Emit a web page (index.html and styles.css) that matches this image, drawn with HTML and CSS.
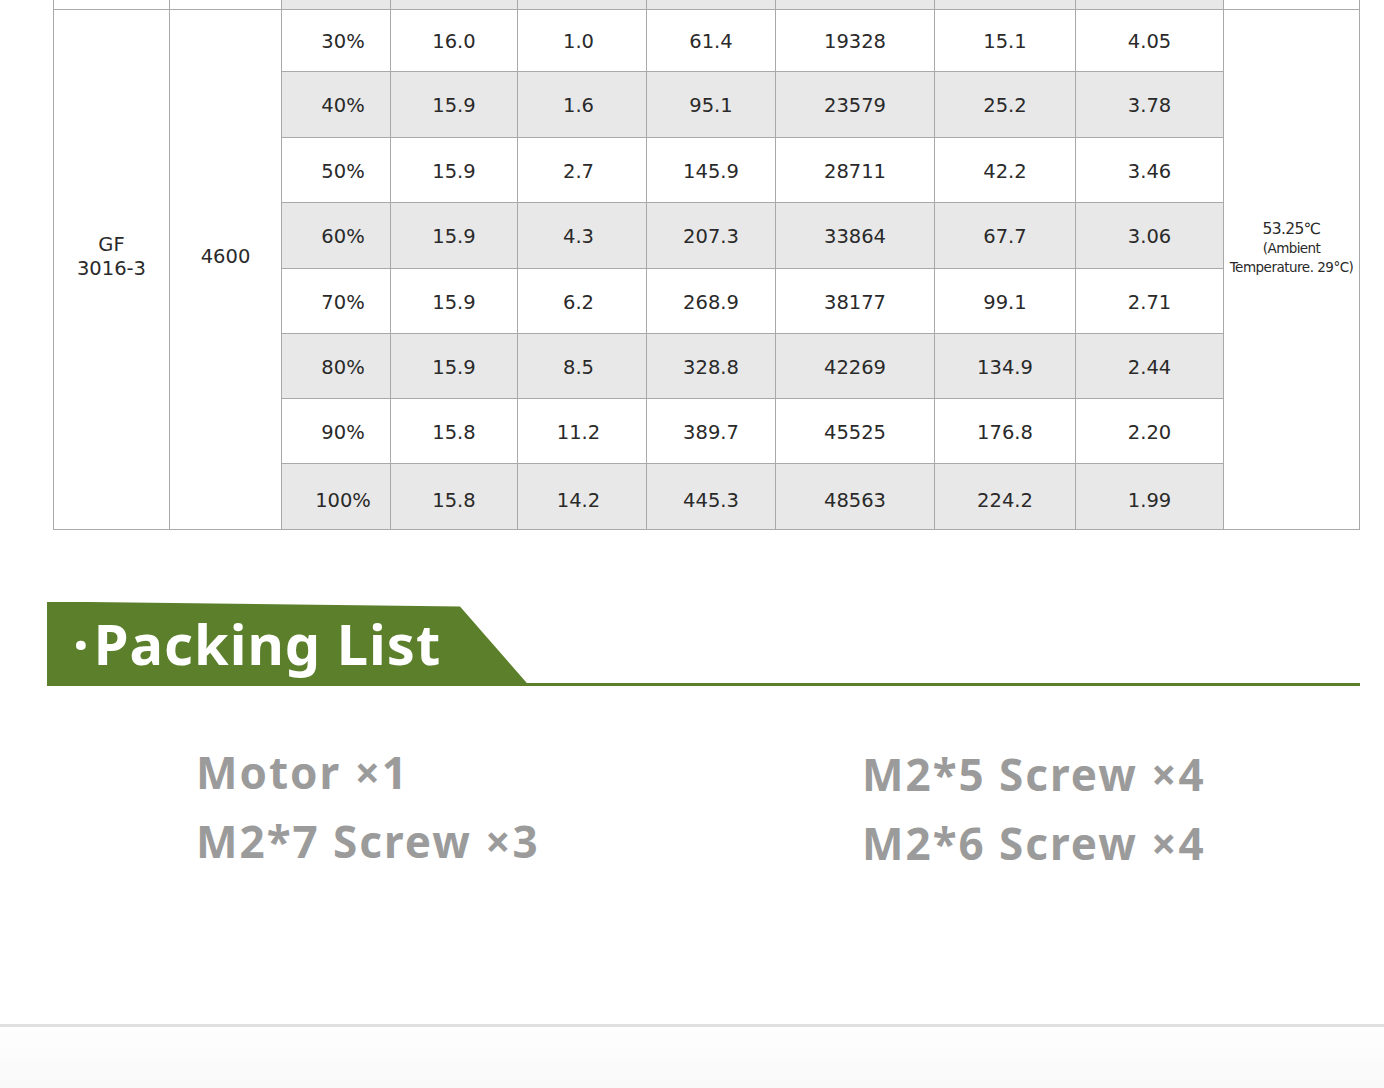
FILE: index.html
```html
<!DOCTYPE html>
<html lang="en">
<head>
<meta charset="utf-8">
<title>Packing List</title>
<link rel="stylesheet" href="styles.css">
</head>
<body>
<div class="page">
  <table class="spec">
    <colgroup>
      <col class="c1"><col class="c2"><col class="c3"><col class="c4"><col class="c5">
      <col class="c6"><col class="c7"><col class="c8"><col class="c9"><col class="c10">
    </colgroup>
    <tbody>
      <tr class="r-top"><td></td><td></td><td class="g"></td><td class="g"></td><td class="g"></td><td class="g"></td><td class="g"></td><td class="g"></td><td class="g"></td><td></td></tr>
      <tr class="r1">
        <td rowspan="8" class="model">GF<br>3016-3</td>
        <td rowspan="8" class="kv">4600</td>
        <td class="pct">30%</td><td>16.0</td><td class="cur">1.0</td><td>61.4</td><td>19328</td><td>15.1</td><td>4.05</td>
        <td rowspan="8" class="temp"><span class="t1">53.25℃</span><span class="t2">(Ambient</span><span class="t3">Temperature. 29°C)</span></td>
      </tr>
      <tr class="g r2"><td class="pct">40%</td><td>15.9</td><td class="cur">1.6</td><td>95.1</td><td>23579</td><td>25.2</td><td>3.78</td></tr>
      <tr class="r3"><td class="pct">50%</td><td>15.9</td><td class="cur">2.7</td><td>145.9</td><td>28711</td><td>42.2</td><td>3.46</td></tr>
      <tr class="g r4"><td class="pct">60%</td><td>15.9</td><td class="cur">4.3</td><td>207.3</td><td>33864</td><td>67.7</td><td>3.06</td></tr>
      <tr class="r5"><td class="pct">70%</td><td>15.9</td><td class="cur">6.2</td><td>268.9</td><td>38177</td><td>99.1</td><td>2.71</td></tr>
      <tr class="g r6"><td class="pct">80%</td><td>15.9</td><td class="cur">8.5</td><td>328.8</td><td>42269</td><td>134.9</td><td>2.44</td></tr>
      <tr class="r7"><td class="pct">90%</td><td>15.8</td><td class="cur">11.2</td><td>389.7</td><td>45525</td><td>176.8</td><td>2.20</td></tr>
      <tr class="g r8 low"><td class="pct">100%</td><td>15.8</td><td class="cur">14.2</td><td>445.3</td><td>48563</td><td>224.2</td><td>1.99</td></tr>
    </tbody>
  </table>

  <div class="section-head">
    <div class="tab"><span class="dot">·</span>Packing List</div>
  </div>

  <div class="packing">
    <div class="col">
      <div class="item">Motor ×1</div>
      <div class="item">M2*7 Screw ×3</div>
    </div>
    <div class="col right">
      <div class="item">M2*5 Screw ×4</div>
      <div class="item">M2*6 Screw ×4</div>
    </div>
  </div>

  <div class="footer"></div>
</div>
</body>
</html>
```

FILE: styles.css
```css
html, body {
  margin: 0;
  padding: 0;
  background: #fff;
}
.page {
  width: 1384px;
  height: 1088px;
  overflow: hidden;
  display: flex;
  flex-direction: column;
}
.spec {
  margin-left: 53px;
  border-collapse: collapse;
  table-layout: fixed;
  width: 1307px;
  font-family: "DejaVu Sans", "Noto Sans", sans-serif;
  font-size: 19.5px;
  color: #2a2a2a;
  flex: none;
}
.c1 { width: 116px; }
.c2 { width: 112px; }
.c3 { width: 109px; }
.c4 { width: 127px; }
.c5 { width: 129px; }
.c6 { width: 129px; }
.c7 { width: 159px; }
.c8 { width: 141px; }
.c9 { width: 148px; }
.c10 { width: 136px; }
.spec td {
  border: 1px solid #a9a9a9;
  text-align: center;
  vertical-align: middle;
  padding: 4px 0 0;
  background: #fff;
  line-height: 24px;
}
.spec tr.g td { background: #e8e8e8; }
.spec td.g { background: #e8e8e8; }
.r-top { height: 9px; }
.r-top td { border-top: none; padding: 0; }
.r1 { height: 62px; }
.r2 { height: 66px; }
.r3 { height: 65px; }
.r4 { height: 66px; }
.r5 { height: 65px; }
.r6 { height: 65px; }
.r7 { height: 65px; }
.r8 { height: 66px; }
.spec tr.low td { padding-top: 9px; }
.spec td.pct { padding-left: 14px; }
.spec td.cur { padding-right: 7px; }
.spec td.model {
  line-height: 24px;
  padding: 0 0 24px;
}
.spec td.kv {
  padding: 0 0 24px;
}
.spec td.temp {
  padding: 0 0 44px;
  letter-spacing: -0.6px;
}
.temp span { display: block; white-space: nowrap; }
.temp .t1 { font-size: 15.5px; line-height: 20px; }
.temp .t2 { font-size: 13.5px; line-height: 19px; }
.temp .t3 { font-size: 13.5px; line-height: 18px; letter-spacing: -0.5px; }

.section-head {
  margin: 72px 0 0 47px;
  width: 1313px;
  height: 84px;
  background: linear-gradient(#5b7f2b, #5b7f2b) left bottom / 100% 3px no-repeat;
  flex: none;
}
.tab {
  width: 482px;
  height: 84px;
  background: #5b7f2b;
  clip-path: polygon(0 0, 413px 5px, 482px 100%, 0 100%);
  color: #fff;
  font-family: "Noto Sans", "Open Sans", sans-serif;
  font-weight: 700;
  font-size: 56px;
  line-height: 82px;
  padding-left: 26px;
  box-sizing: border-box;
  letter-spacing: 1px;
  white-space: nowrap;
}
.dot { margin-right: 4px; }

.packing {
  display: flex;
  margin-top: 52px;
  flex: none;
}
.col {
  display: flex;
  flex-direction: column;
  margin-left: 196px;
  width: 470px;
}
.col.right {
  margin-left: 196px;
  padding-top: 2px;
}
.item {
  font-family: "Noto Sans", "Open Sans", sans-serif;
  font-weight: 700;
  font-size: 44px;
  line-height: 69px;
  color: #9b9b9b;
  letter-spacing: 2px;
  white-space: nowrap;
}

.footer {
  margin-top: auto;
  height: 61px;
  border-top: 3px solid #e0e0e0;
  background: linear-gradient(#fefefe, #f8f8f8);
  flex: none;
}
```
